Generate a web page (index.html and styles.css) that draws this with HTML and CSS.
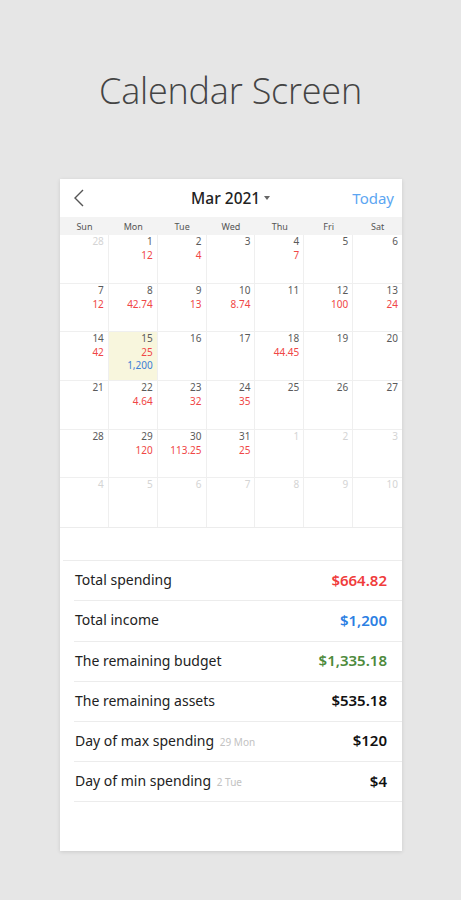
FILE: index.html
```html
<!DOCTYPE html>
<html>
<head>
<meta charset="utf-8">
<link rel="stylesheet" href="styles.css">
</head>
<body>
<h1 class="title">Calendar Screen</h1>
<div class="card">
  <div class="header">
    <svg class="back" width="12" height="18" viewBox="0 0 12 18"><path d="M10 1 L2 9 L10 17" fill="none" stroke="#555" stroke-width="1.4"/></svg>
    <div class="month">Mar 2021<span class="caret"></span></div>
    <div class="today">Today</div>
  </div>
  <div class="weekdays">
    <span>Sun</span><span>Mon</span><span>Tue</span><span>Wed</span><span>Thu</span><span>Fri</span><span>Sat</span>
  </div>
  <div class="grid">
    <div class="cell"><span class="num out">28</span></div>
    <div class="cell"><span class="num">1</span><span class="exp">12</span></div>
    <div class="cell"><span class="num">2</span><span class="exp">4</span></div>
    <div class="cell"><span class="num">3</span></div>
    <div class="cell"><span class="num">4</span><span class="exp">7</span></div>
    <div class="cell"><span class="num">5</span></div>
    <div class="cell"><span class="num">6</span></div>

    <div class="cell"><span class="num">7</span><span class="exp">12</span></div>
    <div class="cell"><span class="num">8</span><span class="exp">42.74</span></div>
    <div class="cell"><span class="num">9</span><span class="exp">13</span></div>
    <div class="cell"><span class="num">10</span><span class="exp">8.74</span></div>
    <div class="cell"><span class="num">11</span></div>
    <div class="cell"><span class="num">12</span><span class="exp">100</span></div>
    <div class="cell"><span class="num">13</span><span class="exp">24</span></div>

    <div class="cell"><span class="num">14</span><span class="exp">42</span></div>
    <div class="cell sel"><span class="num">15</span><span class="exp">25</span><span class="inc">1,200</span></div>
    <div class="cell"><span class="num">16</span></div>
    <div class="cell"><span class="num">17</span></div>
    <div class="cell"><span class="num">18</span><span class="exp">44.45</span></div>
    <div class="cell"><span class="num">19</span></div>
    <div class="cell"><span class="num">20</span></div>

    <div class="cell"><span class="num">21</span></div>
    <div class="cell"><span class="num">22</span><span class="exp">4.64</span></div>
    <div class="cell"><span class="num">23</span><span class="exp">32</span></div>
    <div class="cell"><span class="num">24</span><span class="exp">35</span></div>
    <div class="cell"><span class="num">25</span></div>
    <div class="cell"><span class="num">26</span></div>
    <div class="cell"><span class="num">27</span></div>

    <div class="cell"><span class="num">28</span></div>
    <div class="cell"><span class="num">29</span><span class="exp">120</span></div>
    <div class="cell"><span class="num">30</span><span class="exp">113.25</span></div>
    <div class="cell"><span class="num">31</span><span class="exp">25</span></div>
    <div class="cell"><span class="num out">1</span></div>
    <div class="cell"><span class="num out">2</span></div>
    <div class="cell"><span class="num out">3</span></div>

    <div class="cell"><span class="num out">4</span></div>
    <div class="cell"><span class="num out">5</span></div>
    <div class="cell"><span class="num out">6</span></div>
    <div class="cell"><span class="num out">7</span></div>
    <div class="cell"><span class="num out">8</span></div>
    <div class="cell"><span class="num out">9</span></div>
    <div class="cell"><span class="num out">10</span></div>
  </div>
  <div class="spacer"></div>
  <div class="summary">
    <div class="row"><span class="label">Total spending</span><span class="val red">$664.82</span></div>
    <div class="row"><span class="label">Total income</span><span class="val blue">$1,200</span></div>
    <div class="row"><span class="label">The remaining budget</span><span class="val green">$1,335.18</span></div>
    <div class="row"><span class="label">The remaining assets</span><span class="val">$535.18</span></div>
    <div class="row"><span class="label">Day of max spending <small>29 Mon</small></span><span class="val">$120</span></div>
    <div class="row"><span class="label">Day of min spending <small>2 Tue</small></span><span class="val">$4</span></div>
  </div>
</div>
</body>
</html>
```
FILE: styles.css
```css
* { box-sizing: border-box; }
html, body { margin: 0; padding: 0; }
body {
  background: #e6e6e6;
  font-family: "Noto Sans", "Open Sans", "Liberation Sans", sans-serif;
  width: 461px;
  height: 900px;
  overflow: hidden;
}
.title {
  margin: 0;
  padding-top: 66px;
  height: 116px;
  line-height: 50px;
  text-align: center;
  font-family: "Open Sans", "Noto Sans", sans-serif;
  font-weight: 300;
  font-size: 36px;
  color: #444;
  letter-spacing: -0.2px;
}
.card {
  margin: 63px 0 0 60px;
  width: 342px;
  height: 672px;
  background: #fff;
  box-shadow: 0 1px 4px rgba(0,0,0,0.12);
}
.header {
  height: 38px;
  display: flex;
  align-items: center;
  justify-content: space-between;
  padding: 0 8px 0 13px;
}
.back { display: block; }
.month {
  font-size: 15.5px;
  font-weight: 500;
  color: #222;
  display: flex;
  align-items: center;
  margin-left: 24px;
}
.caret {
  width: 0; height: 0;
  border-left: 3.5px solid transparent;
  border-right: 3.5px solid transparent;
  border-top: 4px solid #666;
  margin-left: 4px;
}
.today {
  font-size: 15px;
  color: #5ca6f2;
}
.weekdays {
  height: 18px;
  background: #f3f3f3;
  display: grid;
  grid-template-columns: repeat(7, 1fr);
  align-items: center;
  font-size: 9px;
  color: #555;
  text-align: center;
}
.grid {
  display: grid;
  grid-template-columns: repeat(7, 1fr);
  grid-auto-rows: 48.7px;
  border-bottom: 1px solid #ececec;
}
.cell {
  border-right: 1px solid #efefef;
  border-bottom: 1px solid #efefef;
  display: flex;
  flex-direction: column;
  align-items: flex-end;
  padding: 0 4px 0 0;
  font-size: 10px;
  line-height: 13px;
}
.cell:nth-child(7n) { border-right: none; }
.cell:nth-last-child(-n+7) { border-bottom: none; }
.sel { background: #f8f6dd; }
.num { color: #5a5a5a; }
.num.out { color: #d4d4d4; }
.exp { color: #f04646; margin-top: 1px; }
.inc { color: #3d7fd6; }
.spacer { height: 32px; }
.summary { border-top: 1px solid #ececec; margin-left: 3px; }
.row {
  height: 40.2px;
  margin-left: 11px;
  border-bottom: 1px solid #ececec;
  display: flex;
  align-items: center;
  justify-content: space-between;
  padding: 0 15px 2px 1px;
  font-size: 14px;
  color: #222;
}
.label small {
  font-size: 10px;
  color: #c2c2c2;
  margin-left: 2px;
}
.val { font-weight: 600; font-size: 15px; color: #111; }
.val.red { color: #f03c3c; }
.val.blue { color: #2c7fe3; }
.val.green { color: #4d8a3c; }
```
